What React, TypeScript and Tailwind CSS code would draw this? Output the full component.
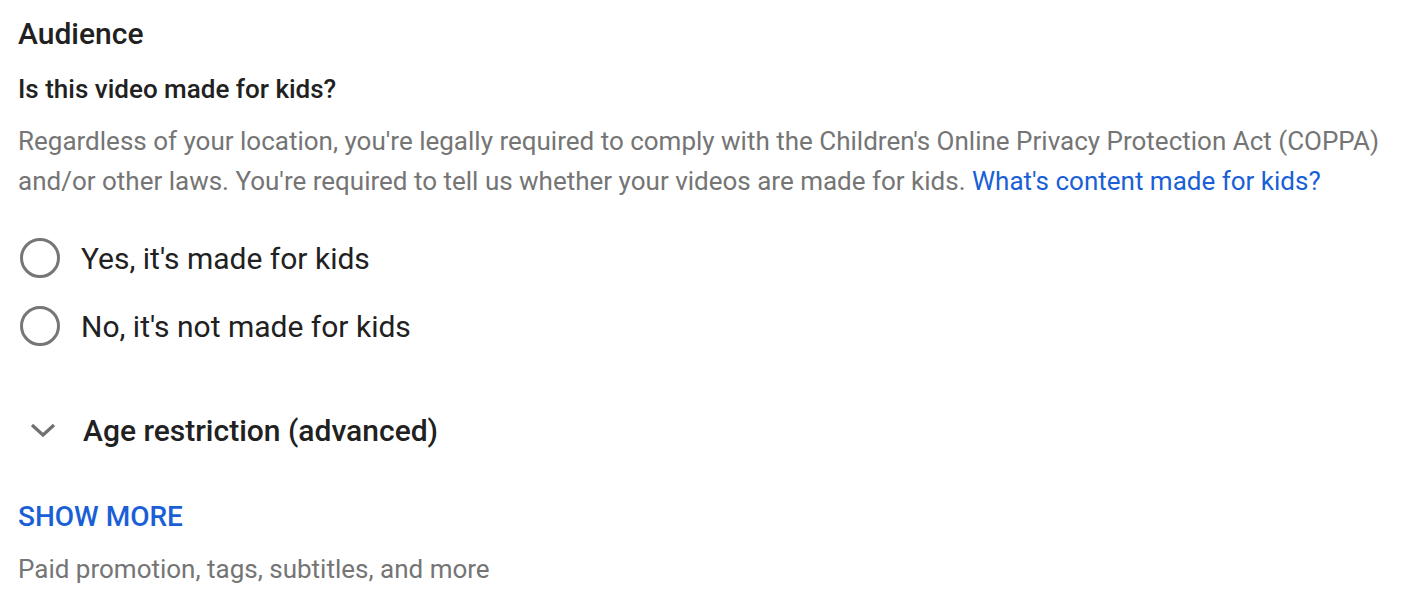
export default function App() {
  const font = { fontFamily: "Roboto, 'Noto Sans', Arial, sans-serif" };
  return (
    <div className="w-[1414px] h-[600px] bg-white overflow-hidden text-[#212121]" style={font}>
      <div className="pl-[18px] pt-[17px]">
        <h2 className="text-[30px] leading-[34px] font-medium text-[#212121]">Audience</h2>
        <h3 className="mt-[23px] text-[26px] leading-[30px] font-medium text-[#212121]">Is this video made for kids?</h3>
        <p className="mt-[17px] text-[26px] leading-[40px] text-[#757575] w-[1380px]">
          Regardless of your location, you're legally required to comply with the Children's Online Privacy Protection Act (COPPA) and/or other laws. You're required to tell us whether your videos are made for kids.{" "}
          <span className="text-[#1a5fd6]">What's content made for kids?</span>
        </p>
        <div className="mt-[37px] flex flex-col gap-[28px]">
          {["Yes, it's made for kids", "No, it's not made for kids"].map((t) => (
            <label key={t} className="flex items-center h-[40px]">
              <span className="ml-[2px] w-[40px] h-[40px] rounded-full border-[3px] border-[#767676] box-border" />
              <span className="ml-[21px] text-[30px] text-[#212121]">{t}</span>
            </label>
          ))}
        </div>
        <div className="mt-[64px] flex items-center h-[40px]">
          <svg width="26" height="16" viewBox="0 0 26 16" className="ml-[12px]">
            <path d="M2 3 L13 13 L24 3" fill="none" stroke="#717171" strokeWidth="3.2" />
          </svg>
          <span className="ml-[27px] text-[30px] font-medium text-[#212121]">Age restriction (advanced)</span>
        </div>
        <div className="mt-[52px] text-[28px] leading-[30px] font-medium text-[#1a5fd6]">SHOW MORE</div>
        <div className="mt-[22px] text-[26px] leading-[30px] text-[#757575]">Paid promotion, tags, subtitles, and more</div>
      </div>
    </div>
  );
}
